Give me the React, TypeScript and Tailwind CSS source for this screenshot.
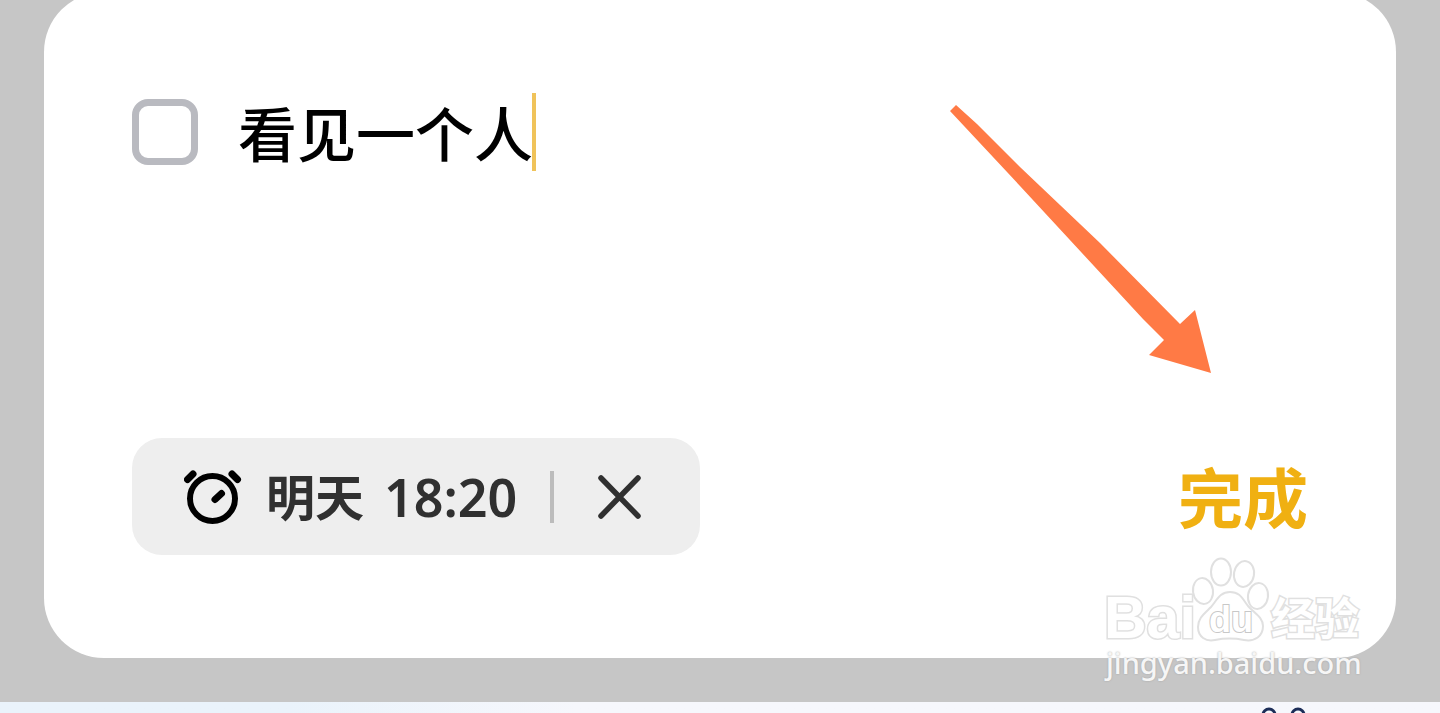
import { useState } from "react";

function AlarmIcon() {
  return (
    <svg viewBox="0 0 58 56" className="h-14 w-[58px] shrink-0" fill="none" stroke="#000" strokeLinecap="round" aria-hidden="true">
      <circle cx="28.500" cy="29.500" r="22.500" strokeWidth="6" />
      <path d="M31 30.500 37.500 24.500" strokeWidth="7" />
      <path d="M3.500 10.500 9 5M48 5 53.500 10.500" strokeWidth="7" />
    </svg>
  );
}

function CloseIcon() {
  return (
    <svg viewBox="0 0 44 44" className="size-11" fill="none" stroke="#303030" strokeWidth="5.500" strokeLinecap="round" aria-hidden="true">
      <path d="M3 3 40 41M40 3 3 41" />
    </svg>
  );
}

function PointerArrow() {
  return (
    <svg viewBox="0 0 264 272" className="pointer-events-none absolute top-[110px] right-[185px] h-[272px] w-[264px]" aria-hidden="true">
      <path d="M3 9 9 3 30 22 73 65 113 103 153 141 233 222 248 208 264 271 202 253 217 238 196 217 73 84Z" fill="#ff7a45" />
    </svg>
  );
}

function Watermark() {
  return (
    <div className="pointer-events-none absolute right-[78px] bottom-[34px] w-64">
      <svg viewBox="0 0 256 92" className="block h-[92px] w-64 overflow-visible" fill="#fff" stroke="#e0e0e0" strokeWidth="2" aria-hidden="true">
        <g paintOrder="stroke" strokeWidth="3">
          <text x="-2" y="83" fontSize="59" fontWeight="700" fontFamily="Liberation Sans, sans-serif">Bai</text>
          <text x="165" y="80" fontSize="44" fontWeight="700" fontFamily="Noto Sans CJK SC, sans-serif">经验</text>
        </g>
        <ellipse cx="97" cy="36" rx="10" ry="13" transform="rotate(-8 97 36)" />
        <ellipse cx="115" cy="17" rx="10" ry="13.500" />
        <ellipse cx="138" cy="19" rx="10" ry="13" transform="rotate(10 138 19)" />
        <ellipse cx="152" cy="41" rx="10" ry="13" transform="rotate(8 152 41)" />
        <path d="M124 37C114 37 111 45 105 52C98 59 92 63 92 72C92 82 100 87 109 85C119 83 128 83 138 85C149 87 157 81 157 71C157 62 148 58 142 51C136 43 134 37 124 37Z" />
        <text x="103" y="77" fontSize="36" fontWeight="700" stroke="#c8c8c8" paintOrder="stroke" fontFamily="Liberation Sans, sans-serif">du</text>
      </svg>
      <p className="font-['Noto_Sans',sans-serif] text-[29px] leading-8 font-medium whitespace-nowrap text-[#f6f6f6] [text-shadow:0_0_2px_#a0a0a0]">
        jingyan.baidu.com
      </p>
    </div>
  );
}

export default function App() {
  const [task, setTask] = useState("看见一个人");
  const [reminder, setReminder] = useState(true);

  return (
    <div className="relative flex h-screen flex-col overflow-hidden bg-[#c6c6c6] font-['Noto_Sans_CJK_SC',sans-serif]">
      <main className="relative mx-11 -mt-2 mb-11 flex flex-1 flex-col justify-between rounded-[60px] bg-white px-[88px] pt-[101px] pb-[103px]">
        <div className="flex h-[78px] items-center">
          <input
            type="checkbox"
            aria-label="完成待办"
            className="size-[66px] shrink-0 appearance-none rounded-2xl border-7 border-[#b9bac0] bg-white checked:bg-[#f0b010]"
          />
          <input
            type="text"
            aria-label="待办内容"
            value={task}
            onChange={(e) => setTask(e.target.value)}
            className="ml-10 h-[78px] w-[296px] bg-transparent text-[59px] leading-[78px] font-medium text-black caret-[#f0c050] outline-none"
          />
          <span className="-ml-0.5 h-[78px] w-1 shrink-0 bg-[#f0c35a]" />
        </div>

        <div className="flex items-center justify-between">
          {reminder && (
            <div className="flex h-[117px] items-center rounded-[30px] bg-[#eee] pr-[58px] pl-[52px]">
              <button type="button" className="flex items-center gap-6 text-[#303030]">
                <AlarmIcon />
                <span className="flex items-center gap-5 font-bold whitespace-nowrap">
                  <span className="pb-1 text-[49px] leading-[60px]">明天</span>
                  <span className="font-['Noto_Sans',sans-serif] text-[52px] leading-[60px] font-semibold">18:20</span>
                </span>
              </button>
              <span className="ml-[33px] h-[52px] w-1 bg-[#bcbcbc]" />
              <button type="button" aria-label="取消提醒" className="ml-11" onClick={() => setReminder(false)}>
                <CloseIcon />
              </button>
            </div>
          )}
          <button type="button" className="ml-auto pb-1 text-[65px] leading-[80px] font-bold text-[#f0b012]">
            完成
          </button>
        </div>
        <PointerArrow />
      </main>

      <footer className="flex h-[11px] shrink-0 justify-end overflow-hidden bg-linear-to-r from-[#eaf3fb] from-20% to-[#f6f7fc] to-40% pr-[133px]">
        <svg viewBox="0 0 46 11" className="h-[11px] w-[46px]" fill="none" stroke="#1c2d58" strokeWidth="3" aria-hidden="true">
          <circle cx="8" cy="13" r="6" />
          <circle cx="37" cy="13" r="6" />
        </svg>
      </footer>
      <Watermark />
    </div>
  );
}
